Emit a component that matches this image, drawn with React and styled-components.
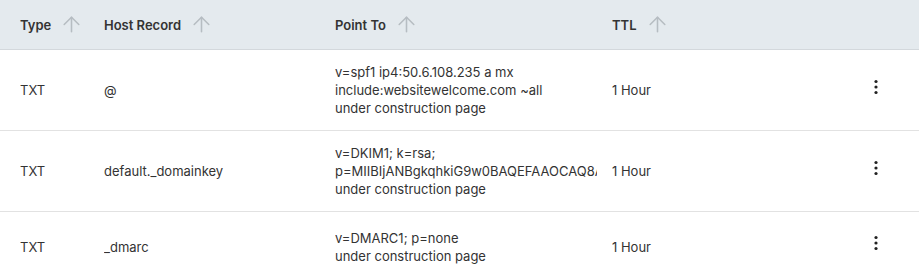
import React from "react";
import styled, { createGlobalStyle } from "styled-components";
import { ArrowUp } from "lucide-react";

const GlobalStyle = createGlobalStyle`
	body {
		margin: 0;
		background: #ffffff;
		font-family: Inter, "Noto Sans", sans-serif;
		color: #333333;
	}
`;

const columns = "69px 216px 262px 1fr 24px";

const Table = styled.div`
	width: 919px;
`;

const HeaderRow = styled.div`
	display: grid;
	grid-template-columns: ${columns};
	column-gap: 15px;
	align-items: center;
	height: 49px;
	padding: 0 31px 0 20px;
	background: #e4eaee;
	border-bottom: 1px solid #d3d8dc;
`;

const HeaderCell = styled.div`
	display: flex;
	align-items: center;
	gap: 8px;
	font-size: 13px;
	font-weight: 600;
	color: #333333;
	white-space: nowrap;

	svg {
		color: #b6bdc2;
		flex-shrink: 0;
	}
`;

const Row = styled.div`
	display: grid;
	grid-template-columns: ${columns};
	column-gap: 15px;
	align-items: center;
	min-height: 70px;
	padding: 13px 31px 13px 20px;
	box-sizing: border-box;
	border-bottom: 1px solid #e2e2e2;
	font-size: 13px;
	line-height: 18px;
`;

const Cell = styled.div`
	overflow: hidden;
	white-space: nowrap;
`;

const Line = styled.div`
	overflow: hidden;
	white-space: nowrap;
`;

const MenuButton = styled.button`
	display: flex;
	align-items: center;
	justify-content: center;
	width: 24px;
	height: 24px;
	margin-bottom: 7px;
	padding: 0;
	border: none;
	background: none;
	color: #222222;
	cursor: pointer;
`;

const records = [
	{
		type: "TXT",
		host: "@",
		point: [
			"v=spf1 ip4:50.6.108.235 a mx",
			"include:websitewelcome.com ~all",
			"under construction page",
		],
		ttl: "1 Hour",
	},
	{
		type: "TXT",
		host: "default._domainkey",
		point: [
			"v=DKIM1; k=rsa;",
			"p=MIIBIjANBgkqhkiG9w0BAQEFAAOCAQ8AMIIBCgKCAQEA",
			"under construction page",
		],
		ttl: "1 Hour",
	},
	{
		type: "TXT",
		host: "_dmarc",
		point: ["v=DMARC1; p=none", "under construction page"],
		ttl: "1 Hour",
	},
];

function Dots() {
	return (
		<svg width="6" height="18" viewBox="0 0 6 18">
			<circle cx="3" cy="3.5" r="1.6" fill="currentColor" />
			<circle cx="3" cy="9" r="1.6" fill="currentColor" />
			<circle cx="3" cy="14.5" r="1.6" fill="currentColor" />
		</svg>
	);
}

function SortHeader({ label }) {
	return (
		<HeaderCell>
			{label}
			<ArrowUp size={25} strokeWidth={1.5} />
		</HeaderCell>
	);
}

export default function App() {
	return (
		<>
			<GlobalStyle />
			<Table>
				<HeaderRow>
					<SortHeader label="Type" />
					<SortHeader label="Host Record" />
					<SortHeader label="Point To" />
					<SortHeader label="TTL" />
					<div />
				</HeaderRow>
				{records.map((r, i) => (
					<Row key={i}>
						<Cell>{r.type}</Cell>
						<Cell>{r.host}</Cell>
						<Cell>
							{r.point.map((line) => (
								<Line key={line}>{line}</Line>
							))}
						</Cell>
						<Cell>{r.ttl}</Cell>
						<MenuButton aria-label="More">
							<Dots />
						</MenuButton>
					</Row>
				))}
			</Table>
		</>
	);
}
